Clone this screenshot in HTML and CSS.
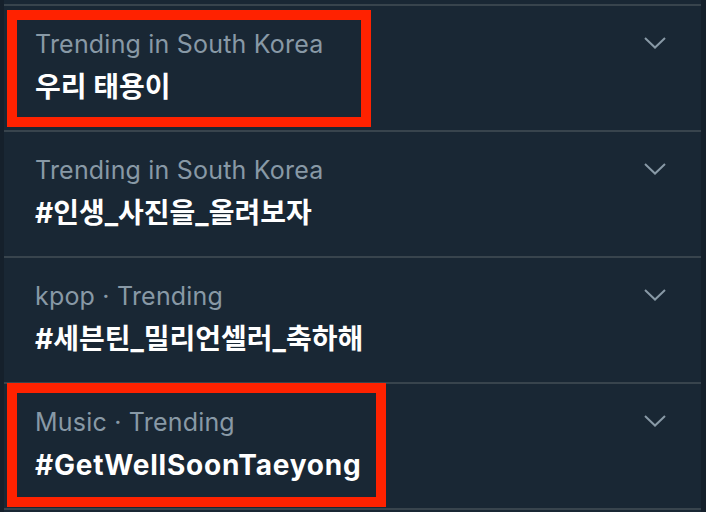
FILE: index.html
```html
<!DOCTYPE html>
<html lang="ko">
<head>
<meta charset="utf-8">
<link rel="stylesheet" href="styles.css">
</head>
<body>
<div class="panel">
  <div class="trend">
    <div class="info">
      <div class="meta">Trending in South Korea</div>
      <div class="title">우리 태용이</div>
    </div>
    <svg class="chev" viewBox="0 0 22 12"><polyline points="1,1 11,10.5 21,1"/></svg>
    <div class="mark mark-a"></div>
  </div>
  <div class="trend">
    <div class="info">
      <div class="meta">Trending in South Korea</div>
      <div class="title">#인생_사진을_올려보자</div>
    </div>
    <svg class="chev" viewBox="0 0 22 12"><polyline points="1,1 11,10.5 21,1"/></svg>
  </div>
  <div class="trend">
    <div class="info">
      <div class="meta">kpop · Trending</div>
      <div class="title">#세븐틴_밀리언셀러_축하해</div>
    </div>
    <svg class="chev" viewBox="0 0 22 12"><polyline points="1,1 11,10.5 21,1"/></svg>
  </div>
  <div class="trend last">
    <div class="info">
      <div class="meta">Music · Trending</div>
      <div class="title latin">#GetWellSoonTaeyong</div>
    </div>
    <svg class="chev" viewBox="0 0 22 12"><polyline points="1,1 11,10.5 21,1"/></svg>
    <div class="mark mark-b"></div>
  </div>
</div>
</body>
</html>
```

FILE: styles.css
```css
html, body {
  margin: 0;
  padding: 0;
  background: #15202b;
  height: 512px;
  overflow: hidden;
}
.panel {
  margin-left: 4px;
  width: 697px;
  height: 512px;
  background: #192734;
  padding-top: 4px;
  box-sizing: border-box;
  display: flex;
  flex-direction: column;
  font-family: "Inter", "Noto Sans CJK KR", sans-serif;
}
.trend {
  position: relative;
  display: flex;
  align-items: flex-start;
  height: 124px;
  border-top: 2px solid #38444d;
  flex-shrink: 0;
}
.trend.last {
  border-bottom: 2px solid #38444d;
}
.info {
  flex: 1;
  padding-left: 31px;
  padding-top: 23px;
}
.meta {
  font-size: 25px;
  line-height: 30px;
  height: 30px;
  letter-spacing: 0.2px;
  color: #8899a6;
  white-space: nowrap;
}
.title {
  margin-top: 11px;
  font-size: 28px;
  line-height: 34px;
  height: 34px;
  font-weight: 700;
  color: #ffffff;
  white-space: nowrap;
}
.title.latin {
  letter-spacing: 0.8px;
}
.chev {
  width: 22px;
  height: 12px;
  margin-top: 31px;
  margin-right: 35px;
  fill: none;
  stroke: #8899a6;
  stroke-width: 2;
}
.mark {
  position: absolute;
  border: 10px solid #ff2200;
  box-sizing: border-box;
}
.mark-a {
  left: 3px;
  top: 4px;
  width: 364px;
  height: 117px;
}
.mark-b {
  left: 3px;
  top: -1px;
  width: 379px;
  height: 124px;
}
```
